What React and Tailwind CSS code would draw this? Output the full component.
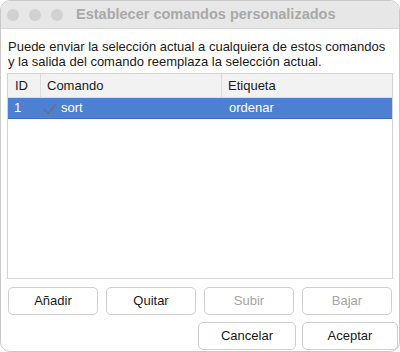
import React from "react";

const Btn = ({ children, disabled, className = "" }) => (
  <button
    className={`h-[28px] rounded-[5px] border border-[#cfcfcf] bg-white text-[13px] ${
      disabled ? "text-[#a5a5a5]" : "text-[#1a1a1a]"
    } ${className}`}
  >
    {children}
  </button>
);

const App = () => {
  return (
    <div className="w-[400px] h-[352px] bg-white" style={{ fontFamily: '"Liberation Sans", Arial, sans-serif' }}>
      <div className="w-[400px] h-[352px] rounded-[10px] border border-[#c9c9c9] overflow-hidden bg-white flex flex-col">
        <div className="h-[28px] bg-[#e7e7e7] border-b border-[#d6d6d6] flex items-center pl-[6px] shrink-0">
          <div className="flex gap-[10px]">
            <span className="w-[12px] h-[12px] rounded-full bg-[#d1d1d1]" />
            <span className="w-[12px] h-[12px] rounded-full bg-[#d1d1d1]" />
            <span className="w-[12px] h-[12px] rounded-full bg-[#d1d1d1]" />
          </div>
          <span className="ml-[13px] text-[14.5px] font-bold text-[#a9a9a9]">Establecer comandos personalizados</span>
        </div>
        <p className="px-[7px] pt-[10px] text-[13px] leading-[15px] text-[#1a1a1a]">
          Puede enviar la selección actual a cualquiera de estos comandos y la salida del comando reemplaza la selección actual.
        </p>
        <div className="mx-[6px] mt-[4px] h-[206px] border border-[#d3d3d3] bg-white text-[13px] text-[#1a1a1a]">
          <div className="flex h-[24px] bg-[#f2f2f2] border-b border-[#dcdcdc]">
            <div className="w-[33px] pl-[7px] flex items-center border-r border-[#dcdcdc]">ID</div>
            <div className="w-[181px] pl-[6px] flex items-center border-r border-[#dcdcdc]">Comando</div>
            <div className="flex-1 pl-[6px] flex items-center">Etiqueta</div>
          </div>
          <div className="flex h-[21px] bg-[#4d80d2] border-b border-[#3d6cc0] text-white">
            <div className="w-[33px] pl-[6px] flex items-center">1</div>
            <div className="w-[181px] pl-[2px] flex items-center gap-[4px]">
              <svg width="14" height="12" viewBox="0 0 14 12" className="mt-[2px]">
                <path d="M1 6.5 L5 10.5 L13 1" fill="none" stroke="#68717d" strokeWidth="1.7" strokeLinecap="round" strokeLinejoin="round" />
              </svg>
              <span>sort</span>
            </div>
            <div className="flex-1 pl-[7px] flex items-center">ordenar</div>
          </div>
        </div>
        <div className="flex gap-[8px] mx-[7px] mt-[8px]">
          <Btn className="w-[91px]">Añadir</Btn>
          <Btn className="w-[91px]">Quitar</Btn>
          <Btn className="w-[91px]" disabled>Subir</Btn>
          <Btn className="w-[91px]" disabled>Bajar</Btn>
        </div>
        <div className="flex justify-end gap-[6px] mt-[7px] pr-[1px]">
          <Btn className="w-[98px]">Cancelar</Btn>
          <Btn className="w-[96px]">Aceptar</Btn>
        </div>
      </div>
    </div>
  );
};

export default App;
